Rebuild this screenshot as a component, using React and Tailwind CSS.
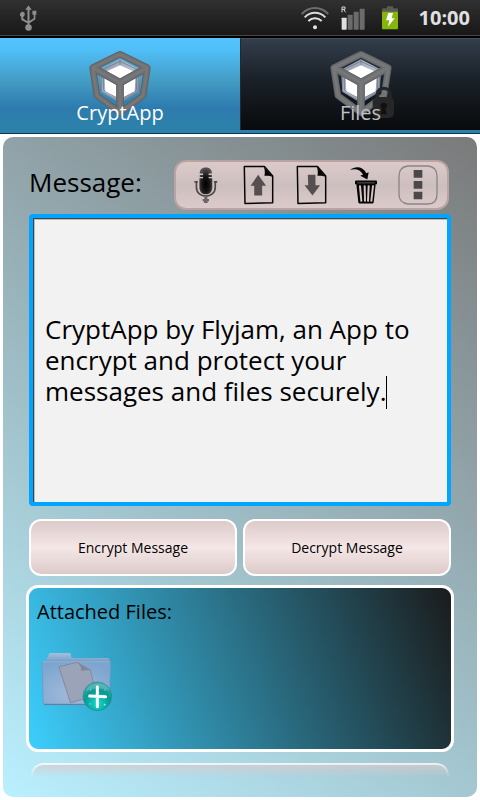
import { useId } from "react";

const FONT = "font-['Open_Sans','Noto_Sans',sans-serif]";

function UsbIcon() {
  return (
    <svg viewBox="58 16 52 78" className="h-[26px] w-[17px]" fill="#8f8f8f" aria-label="USB">
      <path d="M84 17l10 13h-7v34l13-8v-11h-4V33h12v12h-3v14L87 71v5h-6v-5L62 61V51a6 6 0 0 1-2-11 6 6 0 0 1 12 5 6 6 0 0 1-4 6v6l13 8V30h-7z" />
      <circle cx="84" cy="84" r="10" />
    </svg>
  );
}

function WifiIcon() {
  return (
    <svg viewBox="177 20 84 72" className="h-[24px] w-[28px]" fill="none" strokeWidth="6" aria-label="Wi-Fi">
      <path d="M179 44C202 20 236 20 259 44" stroke="#6d6d6d" />
      <path d="M188 54C206 36 232 36 250 54" stroke="#dcdcdc" />
      <path d="M199 65C211 54 227 54 239 65" stroke="#e4e4e4" />
      <circle cx="219" cy="84" r="6" fill="#e4e4e4" />
    </svg>
  );
}

function SignalIcon() {
  return (
    <svg viewBox="298 19 72 72" className="h-[24px] w-[24px]" aria-label="Signal, roaming">
      <path d="M301 38V22h9v7h-9M306 29l6 9" fill="none" stroke="#d8d8d8" strokeWidth="3" />
      <rect x="300" y="54" width="15" height="36" rx="2" fill="#e0e0e0" />
      <rect x="318" y="45" width="15" height="45" rx="1" fill="#6b6b6b" />
      <rect x="336" y="36" width="15" height="54" rx="1" fill="#6b6b6b" />
      <rect x="354" y="27" width="15" height="63" rx="1" fill="#6b6b6b" />
    </svg>
  );
}

function BatteryIcon() {
  return (
    <svg viewBox="420 20 54 72" className="h-[24px] w-[18px]" aria-label="Battery charging">
      <path d="M438 21h18v6h11q4 0 4 4v8h-48v-8q0-4 4-4h11z" fill="#575b52" />
      <path d="M423 37h48v50q0 3-3 3h-42q-3 0-3-3z" fill="#86b50c" />
      <path d="M442 41h14l-4 16h9l-20 25 4-19h-10z" fill="#fff" />
    </svg>
  );
}

function CubeIcon({ locked }) {
  const id = useId();
  return (
    <svg viewBox="263 150 198 207" className="h-[69px] w-[66px]" aria-hidden="true">
      <defs>
        <linearGradient id={id} x1="0" y1="0" x2="1" y2="1">
          <stop offset="0" stopColor="#8b95a6" />
          <stop offset="0.5" stopColor="#b4bdcb" />
          <stop offset="1" stopColor="#7f8899" />
        </linearGradient>
      </defs>
      {/* inner glass faces */}
      <path d="M362 178l60 31-4 66-56 34-56-34-4-66z" fill={`url(#${id})`} />
      <path d="M310 209l52-25 52 25M306 222v51l56 33 56-33v-51" fill="none" stroke="#667083" strokeWidth="2" />
      <path d="M312 230v40l50 29 50-29v-40" fill="none" stroke="#5f6980" strokeWidth="2" />
      <path d="M362 196v-18" stroke="#667083" strokeWidth="2" />
      <path d="M362 196l43 19-43 24-43-24z" fill="#fff" />
      <path d="M316 235l35 20v36l-33-17zM408 235l-35 20v36l33-17z" fill="#fff" />
      {/* outer frame */}
      <g fill="none" strokeLinejoin="round">
        <path d="M362 163l82 40-13 84-69 51-69-51-13-84z" stroke="#5e6062" strokeWidth="20" />
        <path d="M280 203l82 45 82-45M362 246v92" stroke="#5e6062" strokeWidth="23" />
        <path d="M362 163l82 40-13 84-69 51-69-51-13-84z" stroke="#6e7072" strokeWidth="15" />
        <path d="M280 203l82 45 82-45M362 246v92" stroke="#6e7072" strokeWidth="18" />
        <path d="M362 163l82 40-13 84-69 51-69-51-13-84zM280 203l82 45 82-45M362 246v92" stroke="#76787a" strokeWidth="7" />
      </g>
      {locked && (
        <g>
          <path d="M411 298v-15c0-24 38-24 38 0v15" fill="none" stroke="#24272a" strokeWidth="10" />
          <rect x="397" y="291" width="64" height="63" rx="15" fill="#272727" />
          <path d="M430 308a9 9 0 0 1 5 17l4 18h-18l4-18a9 9 0 0 1 5-17z" fill="#111" />
        </g>
      )}
    </svg>
  );
}

function MicIcon() {
  return (
    <svg viewBox="99 52 72 112" className="h-[37px] w-[24px]" aria-hidden="true">
      <defs>
        <radialGradient id="mic" cx="0.5" cy="0.62" r="0.6">
          <stop offset="0" stopColor="#000" />
          <stop offset="0.5" stopColor="#181617" />
          <stop offset="1" stopColor="#555152" />
        </radialGradient>
      </defs>
      <path d="M116 72v-2c0-22 37-22 37 0v2h-10v4h10v6h-10v4h11v27c0 29-39 29-39 0V86h11v-4h-10v-6h10v-4z" fill="url(#mic)" />
      <path d="M100 97h10M159 97h10M106 97v16c0 36 57 36 57 0V97" fill="none" stroke="#4c484a" strokeWidth="5" />
      <path d="M130 140h9v9h5v7h-4v5h-11v-5h-4v-7h5z" fill="#6a6566" />
    </svg>
  );
}

function PageIcon({ down }) {
  return (
    <svg viewBox="250 45 94 120" className="h-[40px] w-[31px]" aria-hidden="true">
      <path d="M254 49h61l25 29v81l-84 2z" fill="none" stroke="#050505" strokeWidth="4.5" strokeLinejoin="round" />
      <path d="M312 48l29 33c-8-4-17-5-26-4 2-9 2-19-3-29z" fill="#050505" />
      {down ? (
        <path d="M286 74h23v32h14l-23 31-24-31h11z" fill="#55504f" />
      ) : (
        <path d="M296 74l24 33h-12v30h-24v-30h-11z" fill="#55504f" />
      )}
    </svg>
  );
}

function TrashIcon() {
  return (
    <svg viewBox="568 48 90 116" className="h-[39px] w-[30px]" aria-hidden="true">
      <path d="M568 59c17-13 39-10 49 10l7-3-4 22-21-11 8-4c-8-15-22-19-39-14z" fill="#050505" />
      <path d="M583 94q0-3 3-3h60q3 0 3 3v8h-4l-6 55q-1 3-4 3h-38q-3 0-4-3l-6-55h-4z" fill="#050505" />
      <path d="M598 108l4 44M612 108l1 44M624 108l-2 44M637 108l-5 44" stroke="#d3c3c3" strokeWidth="6" strokeLinecap="round" />
      <path d="M590 98h52" stroke="#8d8383" strokeWidth="2" />
    </svg>
  );
}

function MenuIcon() {
  return (
    <svg viewBox="713 46 120 120" className="h-[40px] w-[40px]" aria-hidden="true">
      <path d="M743 49h60q27 3 27 29v56q0 29-27 29h-60q-27-3-27-29V78q0-26 27-29z" fill="none" stroke="#8b8585" strokeWidth="4" />
      <path d="M760 61h26v23h-26zM760 94h26v23h-26zM760 126h26v23h-26z" fill="#4b4849" />
    </svg>
  );
}

function FolderIcon() {
  return (
    <svg viewBox="121 214 216 186" className="h-[62px] w-[72px]" aria-hidden="true">
      <defs>
        <linearGradient id="folderBack" x1="0" y1="0" x2="0" y2="1">
          <stop offset="0" stopColor="#a3bfdc" />
          <stop offset="1" stopColor="#6c97c0" />
        </linearGradient>
        <radialGradient id="folderFront" cx="0.45" cy="0.75" r="0.75">
          <stop offset="0" stopColor="#a3b9db" />
          <stop offset="1" stopColor="#7ca6d0" />
        </radialGradient>
        <radialGradient id="badge" cx="0.5" cy="0.75" r="0.75">
          <stop offset="0" stopColor="#14dccb" />
          <stop offset="0.6" stopColor="#069a93" />
          <stop offset="1" stopColor="#4aaeb2" />
        </radialGradient>
      </defs>
      <path d="M136 246v-8l7-6v-7q1-5 7-5h54q6 0 7 5v6l6 4h104q6 0 6 8v10z" fill="url(#folderBack)" />
      <path d="M124 251q0-6 7-6h192q7 0 7 6l-4 118q0 6-7 6H135q-6 0-7-6z" fill="url(#folderFront)" stroke="#7391b6" strokeWidth="2" />
      <path d="M125 246h203" stroke="#9dbcdb" strokeWidth="2" />
      <path d="M130 374h195" stroke="#5f7898" strokeWidth="3" />
      <path d="M175 261l54-13 40 23 18 77-78 21z" fill="#9ba3b8" stroke="#85899b" strokeWidth="3" />
      <path d="M229 248l41 23-30 2q5-12-11-25z" fill="#7f8799" />
      <circle cx="290" cy="350" r="43" fill="url(#badge)" stroke="#1b7e80" strokeWidth="1.5" />
      <path d="M255 334c8-26 61-34 72-1-22-10-49-8-72 1z" fill="#80c8c8" opacity="0.45" />
      <path d="M290 321v60M267 349l48 2" stroke="#fff" strokeWidth="9" strokeLinecap="round" />
      <path d="M312 372v6M309 375h6M268 370v5M313 328v5M270 328v5" stroke="#bdf5ee" strokeWidth="2" />
    </svg>
  );
}

const TOOLS = [
  { label: "Dictate message", icon: <MicIcon /> },
  { label: "Load message", icon: <PageIcon /> },
  { label: "Save message", icon: <PageIcon down /> },
  { label: "Clear message", icon: <TrashIcon /> },
  { label: "More options", icon: <MenuIcon /> },
];

function StatusBar() {
  return (
    <header className="flex h-[38px] items-center border-b-2 border-black bg-[linear-gradient(#303030,#181818_35px,#484848_35px)] px-[10px] text-[#e0e0e0]">
      <div className="ml-[10px] flex-1">
        <UsbIcon />
      </div>
      <WifiIcon />
      <div className="ml-3">
        <SignalIcon />
      </div>
      <div className="ml-4">
        <BatteryIcon />
      </div>
      <time className="ml-5 text-[20px] leading-6 font-bold">10:00</time>
    </header>
  );
}

function Tab({ label, selected, locked }) {
  return (
    <button
      type="button"
      role="tab"
      aria-selected={!!selected}
      className={
        selected
          ? "flex flex-col items-center bg-[linear-gradient(#54c5ff,#50bff8_12%,#439cc4_45%,#2d7bae_74%,#2c83aa)] pt-3 text-white"
          : "mb-[3px] flex flex-col items-center border-t border-l border-t-[#46505c] border-l-[#222a31] bg-[linear-gradient(#333e4c,#1c232b_40%,#080a0c)] pt-[11px] text-[#bfc1c3]"
      }
    >
      <CubeIcon locked={locked} />
      {/* label sits over the foot of the cube */}
      <span className="relative -mt-5 text-[20px] leading-7">{label}</span>
    </button>
  );
}

function ActionButton({ children }) {
  return (
    <button
      type="button"
      className="h-[57px] flex-1 rounded-xl border-2 border-white bg-[linear-gradient(#dccaca,#f5e7e7_50%,#dccaca)] text-[14px] text-black"
    >
      {children}
    </button>
  );
}

export default function App() {
  return (
    <div className={`min-h-screen bg-white ${FONT}`}>
      <StatusBar />

      <nav role="tablist" className="grid h-24 grid-cols-2 border-b border-[#0c3650] bg-[#2c80a9]">
        <Tab label="CryptApp" selected />
        <Tab label="Files" locked />
      </nav>

      <main className="m-[3px] rounded-[10px] bg-[linear-gradient(36deg,#baf0ff,#7a7a7a)] px-[26px] pt-[23px] pb-5">
        <div className="flex items-start justify-between pr-[2px]">
          <label htmlFor="message" className="pt-1 text-[26px] leading-9 text-black">
            Message:
          </label>
          <div
            role="toolbar"
            className="grid h-[50px] w-[275px] grid-cols-5 rounded-xl border-2 border-[#b9a3a3] bg-[linear-gradient(#dccaca,#cdbfbf_50%,#dccaca)] px-[3px]"
          >
            {TOOLS.map((tool) => (
              <button key={tool.label} type="button" aria-label={tool.label} className="grid place-items-center">
                {tool.icon}
              </button>
            ))}
          </div>
        </div>

        <div className="relative mt-1">
          <textarea
            id="message"
            spellCheck={false}
            defaultValue="CryptApp by Flyjam, an App to encrypt and protect your messages and files securely."
            className="block h-[292px] w-full resize-none rounded border-4 border-[#00a5ff] bg-[#f2f2f2] px-3 pt-24 text-[26px] leading-[31px] text-black shadow-[inset_1px_1px_0_#444,inset_2px_2px_0_#bbb] outline-none"
          />
          {/* text cursor */}
          <span className="absolute top-[162px] left-[357px] h-[33px] w-px bg-black" />
        </div>

        <div className="mt-[13px] flex gap-[6px]">
          <ActionButton>Encrypt Message</ActionButton>
          <ActionButton>Decrypt Message</ActionButton>
        </div>

        <section className="-mx-[3px] mt-[9px] h-[167px] rounded-xl border-3 border-white bg-[linear-gradient(69deg,#3dd0ff,#1a1a1a)] bg-origin-border px-2 pt-2">
          <h2 className="text-[20px] leading-8 text-black">Attached Files:</h2>
          <button type="button" aria-label="Attach file" className="mt-[23px] ml-1 block">
            <FolderIcon />
          </button>
        </section>

        {/* next row, fading out at the scroll edge */}
        <div className="mx-[2px] mt-[11px] h-[14px] rounded-t-xl border-2 border-b-0 border-white bg-[#dccaca] opacity-80 [mask-image:linear-gradient(#000,transparent)]" />
      </main>
    </div>
  );
}
